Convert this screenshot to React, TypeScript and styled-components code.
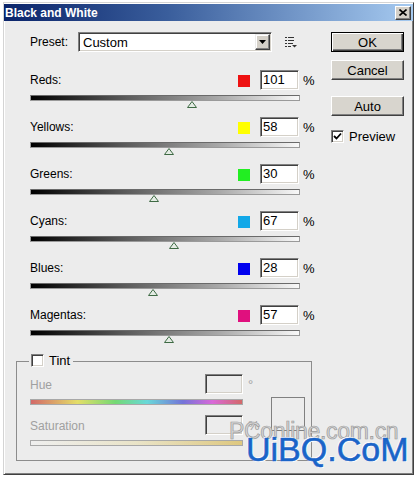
import React from 'react';
import styled, { createGlobalStyle } from 'styled-components';

const Global = createGlobalStyle`
  html, body { margin: 0; padding: 0; background: #ffffff; }
  body { font-family: "Liberation Sans", Arial, sans-serif; font-size: 12px; color: #000; }
`;

const Frame = styled.div`
  position: relative;
  box-sizing: border-box;
  width: 411px;
  height: 473px;
  margin: 2px 0 0 3px;
  border: 1px solid;
  border-color: #d4d4d4 #404040 #404040 #d4d4d4;
  box-shadow: inset 1px 1px 0 #ffffff, inset -1px -1px 0 #808080;
  background: #ececec;
  padding-top: 1px;
  overflow: hidden;
`;

const TitleBar = styled.div`
  height: 17px;
  display: flex;
  align-items: center;
  padding-left: 1px;
  background: linear-gradient(90deg, #0a246a 0%, #3a5e9c 40%, #a6caf0 100%);
  color: #fff;
  font-weight: bold;
  font-size: 12px;
`;

const CloseBtn = styled.div`
  box-sizing: border-box;
  margin-left: auto;
  margin-right: 2px;
  width: 16px;
  height: 14px;
  background: #d4d0c8;
  border: 1px solid;
  border-color: #ffffff #404040 #404040 #ffffff;
  box-shadow: inset -1px -1px 0 #808080;
  display: flex;
  align-items: center;
  justify-content: center;
`;

const Body = styled.div`
  display: flex;
  padding: 11px 0 0 12px;
`;

const LeftCol = styled.div`
  width: 296px;
  flex-shrink: 0;
  display: flex;
  flex-direction: column;
`;

const RightCol = styled.div`
  width: 73px;
  flex-shrink: 0;
  margin-left: 19px;
  display: flex;
  flex-direction: column;
`;

const PresetRow = styled.div`
  height: 20px;
  padding-left: 14px;
  display: flex;
  align-items: center;
`;

const PresetLabel = styled.div`
  width: 48px;
  flex-shrink: 0;
`;

const Combo = styled.div`
  box-sizing: border-box;
  width: 194px;
  flex-shrink: 0;
  height: 20px;
  background: #fff;
  border: 1px solid;
  border-color: #808080 #ffffff #ffffff #808080;
  box-shadow: inset 1px 1px 0 #404040, inset -1px -1px 0 #d4d0c8;
  display: flex;
  align-items: center;
  padding: 0 1px 0 4px;
  font-size: 13px;
`;

const ComboText = styled.span`
  flex: 1;
`;

const ComboArrow = styled.div`
  box-sizing: border-box;
  width: 15px;
  height: 16px;
  background: #d4d0c8;
  border: 1px solid;
  border-color: #ececec #404040 #404040 #ececec;
  box-shadow: inset -1px -1px 0 #808080, inset 1px 1px 0 #fff;
  display: flex;
  align-items: center;
  justify-content: center;
`;

const OptionsIcon = styled.svg`
  margin-left: 13px;
  flex-shrink: 0;
`;

const Rows = styled.div`
  margin-top: 18px;
  display: flex;
  flex-direction: column;
`;

const SliderRow = styled.div`
  height: 47px;
  padding-left: 14px;
`;

const RowHeader = styled.div`
  display: flex;
  height: 20px;
  align-items: center;
  & > * { flex-shrink: 0; }
`;

const RowLabel = styled.span`
  width: 208px;
`;

const Swatch = styled.div<{ $c: string }>`
  width: 12px;
  height: 12px;
  margin-top: 2px;
  background: ${p => p.$c};
`;

const NumBox = styled.div<{ $disabled?: boolean; $w: number; $ml: number }>`
  box-sizing: border-box;
  width: ${p => p.$w}px;
  height: 20px;
  margin-left: ${p => p.$ml}px;
  background: ${p => (p.$disabled ? '#ececec' : '#ffffff')};
  border: 1px solid;
  border-color: #808080 #ffffff #ffffff #808080;
  box-shadow: inset 1px 1px 0 #404040, inset -1px -1px 0 #d4d0c8;
  font-size: 13px;
  line-height: 18px;
  padding-left: 2px;
`;

const Unit = styled.span<{ $disabled?: boolean }>`
  margin-left: ${p => (p.$disabled ? 5 : 4)}px;
  font-size: 13px;
  color: ${p => (p.$disabled ? '#a0a0a0' : '#000')};
`;

const Bar = styled.div`
  position: relative;
  box-sizing: border-box;
  margin-top: 5px;
  width: 270px;
  height: 6px;
  border: 1px solid #9a9a9a;
  border-top-color: #6a6a6a;
  background: linear-gradient(90deg, #000000 0%, #5a5a5a 35%, #a8a8a8 70%, #f8f8f8 100%);
`;

const Thumb = styled.svg`
  position: absolute;
  top: 5px;
  margin-left: -5px;
`;

const GroupBox = styled.div`
  box-sizing: border-box;
  margin-top: 9px;
  width: 296px;
  height: 100px;
  border: 1px solid #8c8c8c;
`;

const Legend = styled.div`
  margin: -9px 0 0 12px;
  padding: 0 3px 0 2px;
  height: 14px;
  width: fit-content;
  display: flex;
  align-items: center;
  gap: 5px;
  background: #ececec;
  font-size: 13px;
`;

const Check = styled.div`
  box-sizing: border-box;
  width: 13px;
  height: 13px;
  flex-shrink: 0;
  background: #fff;
  border: 1px solid;
  border-color: #808080 #ffffff #ffffff #808080;
  box-shadow: inset 1px 1px 0 #404040, inset -1px -1px 0 #d4d0c8;
  display: flex;
  align-items: center;
  justify-content: center;
`;

const TintBody = styled.div`
  display: flex;
  padding-left: 13px;
  margin-top: 7px;
`;

const TintControls = styled.div`
  width: 232px;
  flex-shrink: 0;
  display: flex;
  flex-direction: column;
`;

const TintHeader = styled.div<{ $gap?: number }>`
  display: flex;
  height: 20px;
  align-items: center;
  margin-top: ${p => p.$gap ?? 0}px;
  & > * { flex-shrink: 0; }
`;

const DimLabel = styled.span`
  width: 175px;
  color: #a0a0a0;
  font-size: 12px;
  margin-top: 2px;
`;

const TintBar = styled.div<{ $kind: 'hue' | 'sat' }>`
  box-sizing: border-box;
  margin-top: 5px;
  width: 213px;
  height: 6px;
  border: 1px solid #a8a8a8;
  background:
    linear-gradient(rgba(236, 236, 236, 0.3), rgba(236, 236, 236, 0.3)),
    ${p =>
      p.$kind === 'hue'
        ? 'linear-gradient(90deg, #c83030, #e0d830 22%, #40d040 40%, #30d0d0 55%, #4040d0 72%, #d030d0 86%, #c83030)'
        : 'linear-gradient(90deg, #f0f0f0, #e8e0b8 50%, #d8b850 100%)'};
`;

const ColorBox = styled.div`
  margin: 23px 0 0 9px;
  width: 34px;
  height: 34px;
  flex-shrink: 0;
  box-sizing: border-box;
  border: 1px solid #808080;
`;

const Button = styled.div<{ $default?: boolean; $gap: number }>`
  box-sizing: border-box;
  height: 20px;
  margin-top: ${p => p.$gap}px;
  background: #d8d5ce;
  border: 1px solid;
  border-color: ${p => (p.$default ? '#000' : '#fff #404040 #404040 #fff')};
  box-shadow: ${p =>
    p.$default
      ? 'inset 1px 1px 0 #fff, inset -1px -1px 0 #404040, inset -2px -2px 0 #808080'
      : 'inset -1px -1px 0 #808080'};
  display: flex;
  align-items: center;
  justify-content: center;
  font-size: 13px;
`;

const PreviewRow = styled.div`
  margin-top: 13px;
  display: flex;
  align-items: center;
  gap: 5px;
  font-size: 13px;
`;

const Watermark = styled.div`
  position: absolute;
  right: 4px;
  bottom: 4px;
  width: 182px;
  height: 52px;
  pointer-events: none;
`;

const WmSmall = styled.div`
  position: absolute;
  left: 2px;
  top: 0;
  font-size: 23px;
  color: #d6d6d6;
  -webkit-text-stroke: 0.7px #9a9a9a;
  letter-spacing: -0.3px;
  white-space: nowrap;
`;

const WmBig = styled.div`
  position: absolute;
  left: 19px;
  top: 12px;
  font-size: 34px;
  color: #1a64c8;
  -webkit-text-stroke: 0.6px #1a64c8;
  white-space: nowrap;
  text-shadow: 1px 1px 0 #fff, -1px -1px 0 #fff;
`;

const channels = [
  { name: 'Reds', value: 101, color: '#ee1111' },
  { name: 'Yellows', value: 58, color: '#ffff00' },
  { name: 'Greens', value: 30, color: '#22ee22' },
  { name: 'Cyans', value: 67, color: '#12a8e8' },
  { name: 'Blues', value: 28, color: '#0000ee' },
  { name: 'Magentas', value: 57, color: '#e0107e' },
];

const CheckMark = () => (
  <svg width="9" height="9" viewBox="0 0 9 9">
    <path d="M1 4 L3.5 6.5 L8 1.5" stroke="#000" strokeWidth="1.8" fill="none" />
  </svg>
);

export default function App() {
  return (
    <>
      <Global />
      <Frame>
        <TitleBar>
          Black and White
          <CloseBtn>
            <svg width="8" height="7" viewBox="0 0 8 7">
              <path d="M0.5 0.5 L7.5 6.5 M7.5 0.5 L0.5 6.5" stroke="#000" strokeWidth="1.6" />
            </svg>
          </CloseBtn>
        </TitleBar>
        <Body>
          <LeftCol>
            <PresetRow>
              <PresetLabel>Preset:</PresetLabel>
              <Combo>
                <ComboText>Custom</ComboText>
                <ComboArrow>
                  <svg width="7" height="4" viewBox="0 0 7 4">
                    <path d="M0 0 H7 L3.5 4 Z" fill="#000" />
                  </svg>
                </ComboArrow>
              </Combo>
              <OptionsIcon width="12" height="11" viewBox="0 0 12 11">
                <rect x="0" y="0" width="2" height="1" fill="#333" />
                <rect x="3" y="0" width="6" height="1" fill="#333" />
                <rect x="0" y="3" width="2" height="1" fill="#333" />
                <rect x="3" y="3" width="6" height="1" fill="#333" />
                <rect x="0" y="6" width="2" height="1" fill="#333" />
                <rect x="3" y="6" width="5" height="1" fill="#333" />
                <rect x="0" y="9" width="2" height="1" fill="#333" />
                <rect x="3" y="9" width="3" height="1" fill="#333" />
                <path d="M7 8 H12 L9.5 10.5 Z" fill="#333" />
              </OptionsIcon>
            </PresetRow>
            <Rows>
              {channels.map(c => (
                <SliderRow key={c.name}>
                  <RowHeader>
                    <RowLabel>{c.name}:</RowLabel>
                    <Swatch $c={c.color} />
                    <NumBox $w={39} $ml={10}>{c.value}</NumBox>
                    <Unit>%</Unit>
                  </RowHeader>
                  <Bar>
                    <Thumb
                      width="10"
                      height="7"
                      viewBox="0 0 10 7"
                      style={{ left: ((c.value + 200) / 500) * 268 }}
                    >
                      <path d="M5 0.5 L9.5 6.5 H0.5 Z" fill="#e4ece4" stroke="#3e6a44" strokeWidth="1" />
                    </Thumb>
                  </Bar>
                </SliderRow>
              ))}
            </Rows>
            <GroupBox>
              <Legend>
                <Check />
                <span>Tint</span>
              </Legend>
              <TintBody>
                <TintControls>
                  <TintHeader>
                    <DimLabel>Hue</DimLabel>
                    <NumBox $disabled $w={38} $ml={0} />
                    <Unit $disabled>°</Unit>
                  </TintHeader>
                  <TintBar $kind="hue" />
                  <TintHeader $gap={10}>
                    <DimLabel>Saturation</DimLabel>
                    <NumBox $disabled $w={38} $ml={0} />
                    <Unit $disabled>%</Unit>
                  </TintHeader>
                  <TintBar $kind="sat" />
                </TintControls>
                <ColorBox />
              </TintBody>
            </GroupBox>
          </LeftCol>
          <RightCol>
            <Button $default $gap={0}>OK</Button>
            <Button $gap={8}>Cancel</Button>
            <Button $gap={16}>Auto</Button>
            <PreviewRow>
              <Check>
                <CheckMark />
              </Check>
              <span>Preview</span>
            </PreviewRow>
          </RightCol>
        </Body>
        <Watermark>
          <WmSmall>PConline.com.cn</WmSmall>
          <WmBig>UiBQ.CoM</WmBig>
        </Watermark>
      </Frame>
    </>
  );
}
